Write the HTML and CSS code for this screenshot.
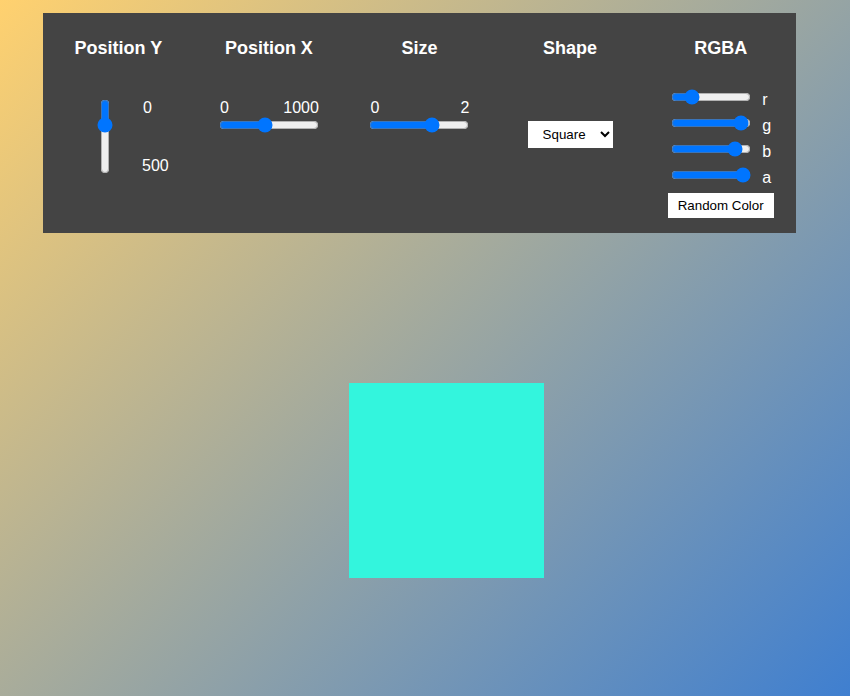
FILE: index.html
```html
<!DOCTYPE html>
<html>
<head>
<meta charset="utf-8">
<link rel="stylesheet" href="styles.css">
</head>
<body>
<div class="panel">
  <div class="col">
    <h3 class="title">Position Y</h3>
    <div class="ctl ctl-y">
      <input class="range range-v" type="range" min="0" max="500" value="150">
      <div class="vlabels"><span>0</span><span>500</span></div>
    </div>
  </div>
  <div class="col">
    <h3 class="title">Position X</h3>
    <div class="ctl ctl-h">
      <div class="hlabels"><span>0</span><span>1000</span></div>
      <input class="range range-h" type="range" min="0" max="1000" value="450">
    </div>
  </div>
  <div class="col">
    <h3 class="title">Size</h3>
    <div class="ctl ctl-h">
      <div class="hlabels"><span>0</span><span>2</span></div>
      <input class="range range-h" type="range" min="0" max="2" step="0.1" value="1.3">
    </div>
  </div>
  <div class="col">
    <h3 class="title">Shape</h3>
    <div class="ctl ctl-shape">
      <select class="shape-select">
        <option>Square</option>
        <option>Circle</option>
      </select>
    </div>
  </div>
  <div class="col">
    <h3 class="title">RGBA</h3>
    <div class="ctl ctl-rgba">
      <div class="rgba-row"><input class="range range-c" type="range" min="0" max="255" value="51"><span class="ch">r</span></div>
      <div class="rgba-row"><input class="range range-c" type="range" min="0" max="255" value="245"><span class="ch">g</span></div>
      <div class="rgba-row"><input class="range range-c" type="range" min="0" max="255" value="221"><span class="ch">b</span></div>
      <div class="rgba-row"><input class="range range-c" type="range" min="0" max="1" step="0.01" value="1"><span class="ch">a</span></div>
      <button class="rand-btn">Random Color</button>
    </div>
  </div>
</div>
<div class="shape"></div>
</body>
</html>
```
FILE: styles.css
```css
html, body {
  margin: 0;
  padding: 0;
}
body {
  min-height: 696px;
  background: linear-gradient(135deg, #ffd16f 0%, #3f7fd0 100%);
  font-family: "Liberation Sans", Arial, sans-serif;
  overflow: hidden;
}
.panel {
  margin: 13px 0 0 43px;
  width: 753px;
  height: 220px;
  box-sizing: border-box;
  background: #444444;
  display: grid;
  grid-template-columns: repeat(5, 1fr);
  padding-top: 24px;
  color: #ffffff;
}
.col {
  display: flex;
  flex-direction: column;
  align-items: center;
}
.title {
  margin: 0;
  font-size: 18px;
  line-height: 22px;
  font-weight: bold;
  color: #ffffff;
}
.range {
  margin: 0;
  accent-color: #0075ff;
}
.ctl-y {
  margin-top: 40px;
  align-self: flex-start;
  margin-left: 54px;
  display: flex;
}
.range-v {
  writing-mode: vertical-lr;
  direction: ltr;
  width: 16px;
  height: 75px;
}
.vlabels {
  display: flex;
  flex-direction: column;
  justify-content: space-between;
  margin-left: 29px;
  height: 76px;
  font-size: 16px;
  line-height: 18px;
}
.vlabels span:first-child {
  padding-left: 1px;
}
.ctl-h {
  margin-top: 40px;
  width: 100px;
  display: flex;
  flex-direction: column;
}
.ctl-h .hlabels {
  padding-left: 1px;
}
.hlabels {
  display: flex;
  justify-content: space-between;
  font-size: 16px;
  line-height: 18px;
}
.range-h {
  width: 100px;
  height: 16px;
  margin-top: 0;
}
.ctl-shape {
  margin-top: 62px;
}
.shape-select {
  width: 85px;
  height: 27px;
  border: none;
  border-radius: 0;
  background: #ffffff;
  color: #000000;
  font-family: "Liberation Sans", Arial, sans-serif;
  font-size: 13.33px;
  padding: 0 2px 0 11px;
}
.ctl-rgba {
  margin-top: 25px;
  display: flex;
  flex-direction: column;
  align-items: center;
}
.rgba-row {
  display: flex;
  align-items: center;
  height: 26px;
}
.range-c {
  width: 80px;
  height: 16px;
}
.ch {
  margin-left: 11px;
  width: 8px;
  font-size: 16px;
  line-height: 18px;
  padding-top: 5px;
}
.rand-btn {
  margin-top: 5px;
  width: 106px;
  height: 25px;
  border: none;
  border-radius: 0;
  background: #ffffff;
  color: #000000;
  font-family: "Liberation Sans", Arial, sans-serif;
  font-size: 13.33px;
  padding: 0;
}
.shape {
  width: 195px;
  height: 195px;
  margin: 150px 0 0 349px;
  background: rgb(51, 245, 221);
}
```
